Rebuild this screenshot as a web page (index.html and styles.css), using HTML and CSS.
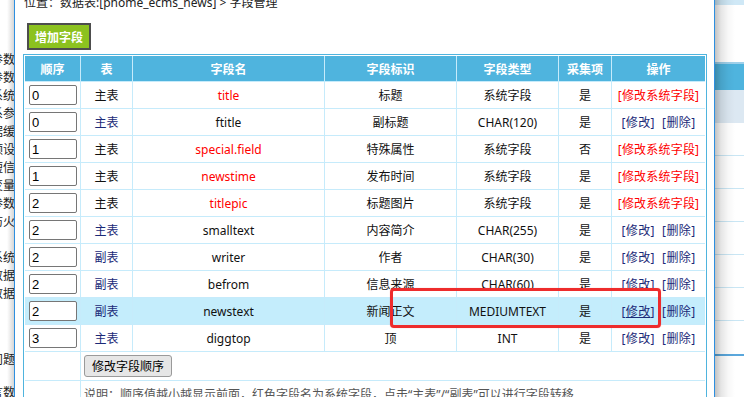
FILE: index.html
```html
<!DOCTYPE html>
<html lang="zh-CN">
<head>
<meta charset="utf-8">
<title>字段管理</title>
<link rel="stylesheet" href="styles.css">
</head>
<body>
<div class="screen">
  <aside class="bg-left">
    <div class="menu">
      <div class="mi">系统参数</div>
      <div class="mi">基本参数</div>
      <div class="mi">管理系统</div>
      <div class="mi">体系参</div>
      <div class="mi">数据缓</div>
      <div class="mi">默认预设</div>
      <div class="mi">短信</div>
      <div class="mi">变量</div>
      <div class="mi">参数</div>
      <div class="mi">防火</div>
      <div class="gap1"></div>
      <div class="mi">系统</div>
      <div class="mi">数据</div>
      <div class="mi">数据</div>
      <div class="gap2"></div>
      <div class="mi">问题</div>
      <div class="gap3"></div>
      <div class="mi">留言数</div>
    </div>
  </aside>

  <main class="dialog">
    <div class="content">
      <div class="crumb">位置：数据表:[phome_ecms_news] &gt; 字段管理</div>
      <div class="toolbar"><button class="btn-add" type="button">增加字段</button></div>
      <table class="grid">
        <thead>
          <tr>
            <th class="c1">顺序</th>
            <th class="c2">表</th>
            <th class="c3">字段名</th>
            <th class="c4">字段标识</th>
            <th class="c5">字段类型</th>
            <th class="c6">采集项</th>
            <th class="c7">操作</th>
          </tr>
        </thead>
        <tbody>
          <tr>
            <td class="ord"><input class="num" value="0"></td>
            <td>主表</td>
            <td class="sys">title</td>
            <td>标题</td>
            <td>系统字段</td>
            <td>是</td>
            <td class="ops"><a class="op-sys">[修改系统字段]</a></td>
          </tr>
          <tr>
            <td class="ord"><input class="num" value="0"></td>
            <td><a class="lnk">主表</a></td>
            <td>ftitle</td>
            <td>副标题</td>
            <td>CHAR(120)</td>
            <td>是</td>
            <td class="ops"><a class="lnk">[修改]</a> <a class="lnk">[删除]</a></td>
          </tr>
          <tr>
            <td class="ord"><input class="num" value="1"></td>
            <td>主表</td>
            <td class="sys">special.field</td>
            <td>特殊属性</td>
            <td>系统字段</td>
            <td>否</td>
            <td class="ops"><a class="op-sys">[修改系统字段]</a></td>
          </tr>
          <tr>
            <td class="ord"><input class="num" value="1"></td>
            <td>主表</td>
            <td class="sys">newstime</td>
            <td>发布时间</td>
            <td>系统字段</td>
            <td>是</td>
            <td class="ops"><a class="op-sys">[修改系统字段]</a></td>
          </tr>
          <tr>
            <td class="ord"><input class="num" value="2"></td>
            <td>主表</td>
            <td class="sys">titlepic</td>
            <td>标题图片</td>
            <td>系统字段</td>
            <td>是</td>
            <td class="ops"><a class="op-sys">[修改系统字段]</a></td>
          </tr>
          <tr>
            <td class="ord"><input class="num" value="2"></td>
            <td><a class="lnk">主表</a></td>
            <td>smalltext</td>
            <td>内容简介</td>
            <td>CHAR(255)</td>
            <td>是</td>
            <td class="ops"><a class="lnk">[修改]</a> <a class="lnk">[删除]</a></td>
          </tr>
          <tr>
            <td class="ord"><input class="num" value="2"></td>
            <td><a class="lnk">副表</a></td>
            <td>writer</td>
            <td>作者</td>
            <td>CHAR(30)</td>
            <td>是</td>
            <td class="ops"><a class="lnk">[修改]</a> <a class="lnk">[删除]</a></td>
          </tr>
          <tr>
            <td class="ord"><input class="num" value="2"></td>
            <td><a class="lnk">副表</a></td>
            <td>befrom</td>
            <td>信息来源</td>
            <td>CHAR(60)</td>
            <td>是</td>
            <td class="ops"><a class="lnk">[修改]</a> <a class="lnk">[删除]</a></td>
          </tr>
          <tr class="hover">
            <td class="ord"><input class="num" value="2"></td>
            <td><a class="lnk">副表</a></td>
            <td>newstext</td>
            <td>新闻正文</td>
            <td>MEDIUMTEXT</td>
            <td>是</td>
            <td class="ops"><a class="lnk">[<span class="ul">修改</span>]</a> <a class="lnk">[删除]</a></td>
          </tr>
          <tr>
            <td class="ord"><input class="num" value="3"></td>
            <td><a class="lnk">主表</a></td>
            <td>diggtop</td>
            <td>顶</td>
            <td>INT</td>
            <td>是</td>
            <td class="ops"><a class="lnk">[修改]</a> <a class="lnk">[删除]</a></td>
          </tr>
          <tr class="btn-row">
            <td></td>
            <td colspan="6" class="left"><button class="btn" type="button">修改字段顺序</button></td>
          </tr>
          <tr class="note-row">
            <td></td>
            <td colspan="6" class="note">说明：顺序值越小越显示前面，红色字段名为系统字段，点击“主表”/“副表”可以进行字段转移.</td>
          </tr>
        </tbody>
      </table>
    </div>
  </main>

  <aside class="bg-right"></aside>
</div>
<div class="mark"></div>
</body>
</html>
```

FILE: styles.css
```css
html, body {
  margin: 0;
  padding: 0;
  background: #fff;
}
body {
  width: 744px;
  height: 397px;
  overflow: hidden;
  position: relative;
  font-family: "Noto Sans", "Noto Sans CJK SC", sans-serif;
  font-size: 12px;
  color: #111;
}
.screen {
  display: flex;
  height: 397px;
}

/* background page, left fragment */
.bg-left {
  width: 14px;
  flex: none;
  position: relative;
  overflow: hidden;
  background: #fff;
}
.menu {
  width: 200px;
  margin-left: -185px;
  padding-top: 51px;
  text-align: right;
  line-height: 18px;
  color: #222;
  white-space: nowrap;
}
.mi { height: 18px; }
.gap1 { height: 18px; }
.gap2 { height: 48px; }
.gap3 { height: 15px; }
.bg-left::after {
  content: "";
  position: absolute;
  top: 0;
  right: 0;
  bottom: 0;
  width: 7px;
  background: linear-gradient(to right, rgba(0,0,0,0), rgba(0,0,0,0.16));
}

/* background page, right fragment */
.bg-right {
  width: 29px;
  flex: none;
  background:
    linear-gradient(to right, rgba(0,0,0,0.24), rgba(0,0,0,0.1) 6px, rgba(0,0,0,0.03) 13px, rgba(0,0,0,0) 20px),
    repeating-linear-gradient(to bottom, rgba(0,0,0,0) 0 32px, #c9e6f4 32px 33px) 0 123px / 100% 200px no-repeat,
    linear-gradient(to bottom,
      #cfe8f6 0 5px, #fff 5px 62px, #9fd0ea 62px 64px, #4fb4de 64px 90px,
      #dce8f2 90px 123px, #fff 123px 354px, #5aa7dc 354px 356px, #fff 356px);
}

/* dialog */
.dialog {
  width: 701px;
  flex: none;
  box-sizing: border-box;
  border-left: 1px solid #2d8fe0;
  border-right: 1px solid #2d8fe0;
  background: #fff;
  overflow: hidden;
}
.content {
  padding: 0 7px 0 8px;
  margin-top: -6px;
}
.crumb {
  height: 18px;
  line-height: 18px;
  padding-left: 1px;
  color: #222;
  white-space: nowrap;
}
.toolbar {
  margin-top: 11px;
  padding-left: 4px;
}
.btn-add {
  display: block;
  width: 64px;
  height: 27px;
  box-sizing: border-box;
  margin: 0;
  padding: 0;
  border: 2px solid #4d4d4d;
  background: #8cc21f;
  color: #fff;
  font-family: "Noto Sans CJK SC", sans-serif;
  font-size: 12px;
  font-weight: bold;
  line-height: 23px;
}

/* table */
.grid {
  margin-top: 4px;
  width: 684px;
  box-sizing: border-box;
  border: 1px solid #4fb4de;
  padding: 1px;
  background: #fff;
  border-spacing: 0;
  table-layout: fixed;
  font-size: 12px;
}
.grid th, .grid td {
  box-sizing: border-box;
  padding: 0;
  text-align: center;
  vertical-align: middle;
  border-right: 1px solid #c6ebfb;
  border-bottom: 1px solid #c6ebfb;
  white-space: nowrap;
}
.grid th:last-child, .grid td:last-child { border-right: none; }
.grid thead tr { height: 26px; }
.grid th {
  background: #4fb4de;
  color: #fff;
  font-weight: bold;
  font-family: "Noto Sans CJK SC", sans-serif;
}
.grid tbody tr { height: 27px; }
.c1 { width: 56px; }
.c2 { width: 52px; }
.c3 { width: 192px; }
.c4 { width: 132px; }
.c5 { width: 102px; }
.c6 { width: 53px; }
.c7 { width: 93px; }

.grid td.ord {
  text-align: left;
  padding-left: 4px;
}
.num {
  display: block;
  width: 48px;
  height: 20px;
  box-sizing: border-box;
  margin: 0;
  padding: 0 2px;
  border: 1px solid #767676;
  border-radius: 2px;
  background: #fff;
  font-family: "Liberation Sans", sans-serif;
  font-size: 13px;
  color: #000;
}
.sys { color: #ff0000; }
.op-sys { color: #ff0000; letter-spacing: 0.2px; }
.lnk { color: #1b2a78; text-decoration: none; }
.ops .lnk { letter-spacing: 0.4px; }
.ops .lnk + .lnk { margin-left: 4px; }
.ul { text-decoration: underline; }
.grid tr.hover td { background: #c4edfc; }

.grid tr.btn-row { height: 29px; }
.grid td.left { text-align: left; padding-left: 3px; }
.btn {
  display: block;
  width: 88px;
  height: 22px;
  box-sizing: border-box;
  margin: 0;
  padding: 0;
  border: 1px solid #9a9a9a;
  border-radius: 3px;
  background: #e6e6e6;
  color: #000;
  font-family: "Noto Sans CJK SC", sans-serif;
  font-size: 12px;
  line-height: 20px;
}
.grid td.note {
  text-align: left;
  vertical-align: top;
  padding: 5px 0 0 3px;
  line-height: 18px;
  color: #555;
  height: 40px;
}

/* red annotation frame drawn over the screenshot */
.mark {
  position: absolute;
  left: 390px;
  top: 288px;
  width: 271px;
  height: 40px;
  box-sizing: border-box;
  border: 3px solid #ee2c2c;
  border-radius: 4px;
  box-shadow: 0 0 1px rgba(200, 0, 0, 0.4);
}
```
